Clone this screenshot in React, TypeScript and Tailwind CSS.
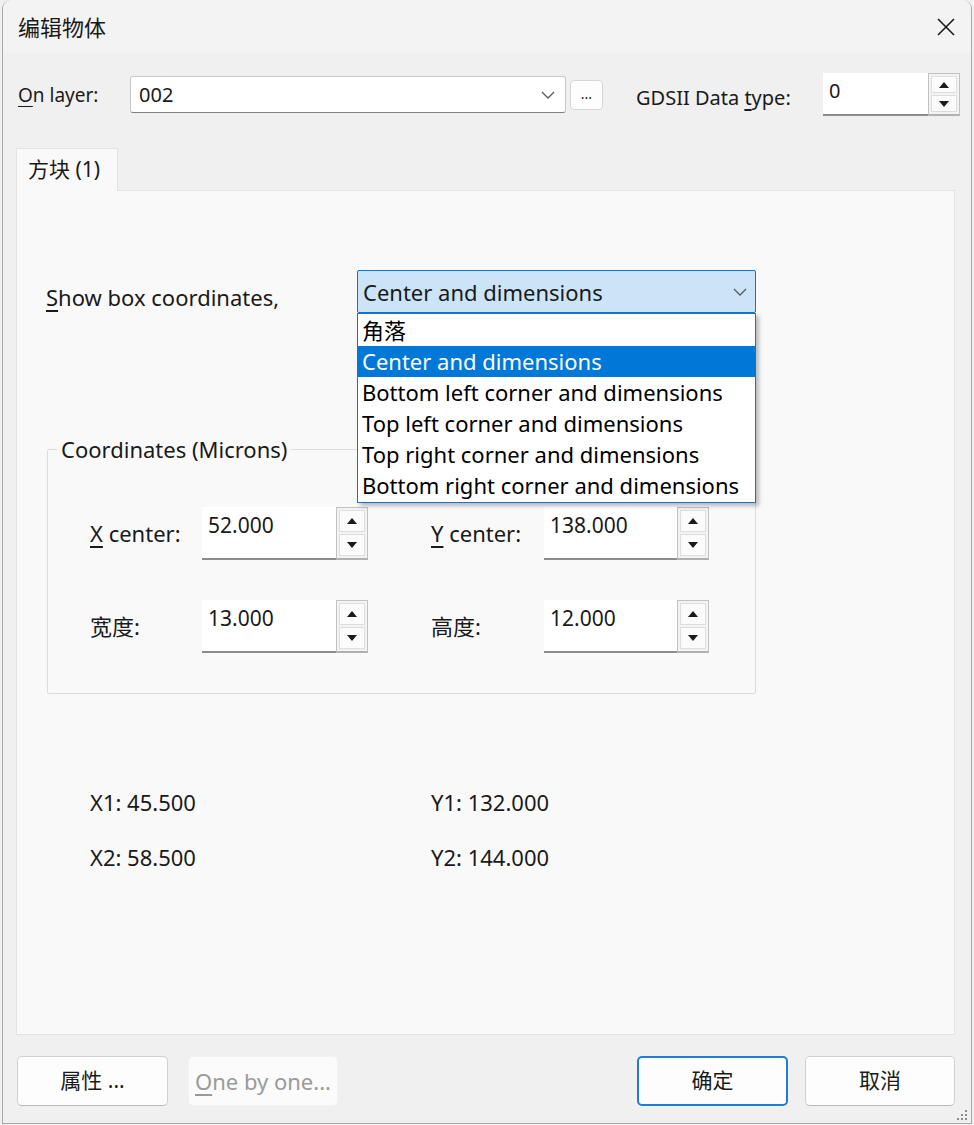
import React from 'react';

const font = "font-['Noto_Sans','Noto_Sans_CJK_SC',sans-serif]";

function Arrow({ up }: { up?: boolean }) {
  return (
    <svg width="10" height="6" viewBox="0 0 10 6">
      {up ? <polygon points="5,0 10,6 0,6" fill="#1a1a1a" /> : <polygon points="0,0 10,0 5,6" fill="#1a1a1a" />}
    </svg>
  );
}

function Spin({ value, w, h, size }: { value: string; w: string; h: string; size: string }) {
  return (
    <div className={`flex ${w} ${h} shrink-0`}>
      <div className={`flex-1 bg-white border-b-2 border-[#8c8c8c] px-[6px] pt-[4px] ${size} leading-[28px] text-[#1a1a1a]`}>
        {value}
      </div>
      <div className="w-[32px] flex flex-col border border-[#c2c2c2] border-b-2 border-b-[#b0b0b0] bg-[#f3f3f3] p-[2px] gap-[2px]">
        <div className="flex-1 flex items-center justify-center bg-[#fbfbfb] border border-[#dedede]">
          <Arrow up />
        </div>
        <div className="flex-1 flex items-center justify-center bg-[#fbfbfb] border border-[#dedede]">
          <Arrow />
        </div>
      </div>
    </div>
  );
}

function Chevron() {
  return (
    <svg width="14" height="8" viewBox="0 0 14 8">
      <polyline points="1,1 7,7 13,1" fill="none" stroke="#5a5a5a" strokeWidth="1.3" />
    </svg>
  );
}

function Btn({ children, className }: { children: React.ReactNode; className: string }) {
  return (
    <div className={`h-[50px] flex items-center justify-center rounded-[5px] text-[21px] ${className}`}>{children}</div>
  );
}

const options = [
  '角落',
  'Center and dimensions',
  'Bottom left corner and dimensions',
  'Top left corner and dimensions',
  'Top right corner and dimensions',
  'Bottom right corner and dimensions',
];

export default function App() {
  return (
    <div className={`w-[974px] h-[1125px] bg-[#f0f0f0] ${font} text-[#1a1a1a]`}>
      <div className="ml-[2px] w-[970px] h-[1124px] flex flex-col rounded-t-[9px] border border-t-0 border-[#a8a8a8] overflow-hidden">
        {/* title bar */}
        <div className="h-[53px] shrink-0 bg-[#f3f3f3] flex items-center justify-between pl-[15px] pr-[16px]">
          <span className="text-[22px] leading-none">编辑物体</span>
          <svg width="18" height="18" viewBox="0 0 18 18">
            <path d="M1 1L17 17M17 1L1 17" stroke="#1a1a1a" strokeWidth="1.6" />
          </svg>
        </div>

        {/* layer row */}
        <div className="mt-[20px] h-[43px] flex items-center pl-[15px]">
          <span className="w-[112px] text-[19px] pt-[2px]">
            <span className="underline underline-offset-[4px]">O</span>n layer:
          </span>
          <div className="w-[436px] h-[37px] bg-white border border-[#c8c8c8] border-b-[#808080] rounded-[3px] flex items-center justify-between pl-[8px] pr-[10px]">
            <span className="text-[20px]">002</span>
            <Chevron />
          </div>
          <div className="ml-[4px] w-[33px] h-[30px] bg-[#fdfdfd] border border-[#d6d6d6] rounded-[4px] flex items-center justify-center text-[14px] leading-none pb-[2px]">
            ...
          </div>
          <span className="ml-[33px] w-[187px] text-[20px] pt-[6px]">
            GDSII Data <span className="underline underline-offset-[4px]">t</span>ype:
          </span>
          <Spin value="0" w="w-[137px]" h="h-[43px]" size="text-[20px]" />
        </div>

        {/* tab */}
        <div className="mt-[32px] ml-[13px] flex">
          <div className="w-[102px] h-[43px] -mb-px relative z-10 bg-[#f9f9f9] border border-b-0 border-[#e3e3e3] flex items-center pl-[11px] text-[21px]">
            方块 (1)
          </div>
        </div>

        {/* tab panel */}
        <div className="ml-[13px] w-[939px] h-[845px] bg-[#f9f9f9] border border-[#e3e3e3] flex flex-col">
          <div className="mt-[78px] flex items-center pl-[29px]">
            <span className="w-[311px] text-[22px] pt-[12px]">
              <span className="underline underline-offset-[4px]">S</span>how box coordinates,
            </span>
            <div className="relative">
              <div className="w-[399px] h-[43px] bg-[#cce4f7] border border-[#0078d4] rounded-[2px] flex items-center justify-between pl-[5px] pr-[8px]">
                <span className="text-[22px] pt-[2px]">Center and dimensions</span>
                <Chevron />
              </div>
              <div className="absolute left-0 top-full z-20 w-[399px] bg-white border border-[#1a73d0] pt-[1px] pb-[1px] shadow-[3px_3px_4px_rgba(0,0,0,0.25)]">
                {options.map((o, i) => (
                  <div
                    key={o}
                    className={`h-[31px] leading-[31px] pl-[4px] text-[22px] ${i === 1 ? 'bg-[#0078d7] text-white' : 'text-black'}`}
                  >
                    {o}
                  </div>
                ))}
              </div>
            </div>
          </div>

          {/* group box */}
          <fieldset className="mt-[121px] ml-[30px] w-[709px] h-[259px] border border-[#dcdcdc] rounded-[2px]">
            <legend className="ml-[9px] px-[4px] text-[22px] leading-[28px]">Coordinates (Microns)</legend>
            <div className="mt-[44px] ml-[42px] grid grid-cols-[112px_166px_63px_113px_165px] gap-y-[40px] items-center text-[22px]">
              <span>
                <span className="underline underline-offset-[4px]">X</span> center:
              </span>
              <Spin value="52.000" w="w-[166px]" h="h-[53px]" size="text-[21px]" />
              <span />
              <span>
                <span className="underline underline-offset-[4px]">Y</span> center:
              </span>
              <Spin value="138.000" w="w-[165px]" h="h-[53px]" size="text-[21px]" />

              <span>宽度:</span>
              <Spin value="13.000" w="w-[166px]" h="h-[53px]" size="text-[21px]" />
              <span />
              <span>高度:</span>
              <Spin value="12.000" w="w-[165px]" h="h-[53px]" size="text-[21px]" />
            </div>
          </fieldset>

          <div className="mt-[94px] ml-[73px] grid grid-cols-[341px_200px] gap-y-[27px] text-[22px] leading-[28px]">
            <span>X1: 45.500</span>
            <span>Y1: 132.000</span>
            <span>X2: 58.500</span>
            <span>Y2: 144.000</span>
          </div>
        </div>

        {/* buttons */}
        <div className="mt-[21px] flex pl-[14px] relative">
          <Btn className="w-[151px] bg-[#fdfdfd] border border-[#d0d0d0] border-b-[#b8b8b8]">属性 ...</Btn>
          <Btn className="ml-[20px] w-[150px] bg-[#fbfbfb] border border-[#f2f2f2] text-[#9a9a9a] text-[22px]">
            <span>
              <span className="underline underline-offset-[4px]">O</span>ne by one...
            </span>
          </Btn>
          <Btn className="ml-[299px] w-[151px] bg-[#fdfdfd] border-2 border-[#1e7ed6]">确定</Btn>
          <Btn className="ml-[17px] w-[150px] bg-[#fdfdfd] border border-[#d0d0d0] border-b-[#b8b8b8]">取消</Btn>
        </div>
        <div className="flex justify-end pr-[3px] mt-[2px]">
          <svg width="14" height="14" viewBox="0 0 14 14">
            <g fill="#8a8a8a">
              <rect x="11" y="2" width="2" height="2" />
              <rect x="7" y="6" width="2" height="2" />
              <rect x="11" y="6" width="2" height="2" />
              <rect x="3" y="10" width="2" height="2" />
              <rect x="7" y="10" width="2" height="2" />
              <rect x="11" y="10" width="2" height="2" />
            </g>
          </svg>
        </div>
      </div>
    </div>
  );
}
